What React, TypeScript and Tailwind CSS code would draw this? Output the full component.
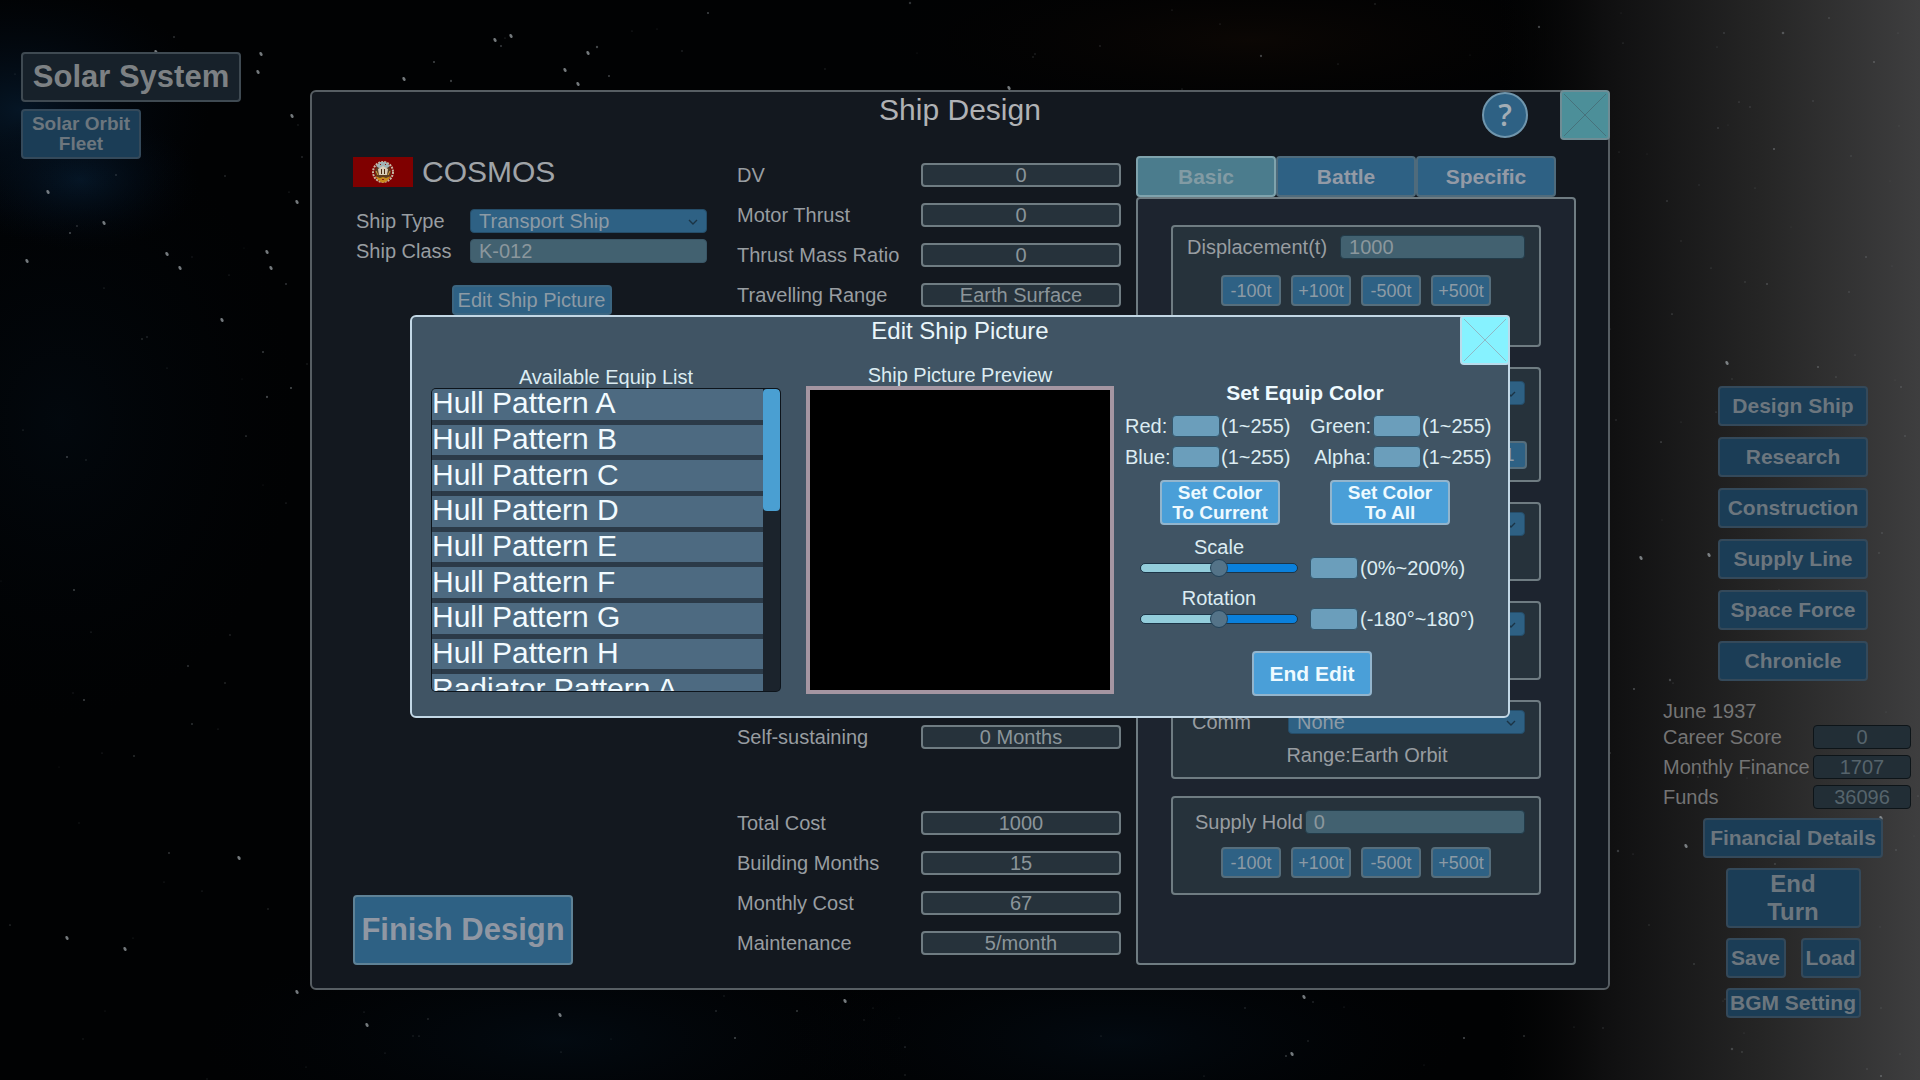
import { Fragment, useId, useState } from "react";
import type { ReactNode } from "react";

const menuItems = ["Design Ship", "Research", "Construction", "Supply Line", "Space Force", "Chronicle"];

const accounts = [
  { label: "Career Score", value: "0" },
  { label: "Monthly Finance", value: "1707" },
  { label: "Funds", value: "36096" },
];

const performance = [
  { label: "DV", value: "0" },
  { label: "Motor Thrust", value: "0" },
  { label: "Thrust Mass Ratio", value: "0" },
  { label: "Travelling Range", value: "Earth Surface" },
];

const costs = [
  { label: "Total Cost", value: "1000" },
  { label: "Building Months", value: "15" },
  { label: "Monthly Cost", value: "67" },
  { label: "Maintenance", value: "5/month" },
];

const equipList = [
  "Hull Pattern A",
  "Hull Pattern B",
  "Hull Pattern C",
  "Hull Pattern D",
  "Hull Pattern E",
  "Hull Pattern F",
  "Hull Pattern G",
  "Hull Pattern H",
  "Radiator Pattern A",
];

const channels = ["Red", "Green", "Blue", "Alpha"];
const steps = ["-100t", "+100t", "-500t", "+500t"];
const tabs = ["Basic", "Battle", "Specific"];

// small seeded generator, so the sky is the same on every render
function makeStars(count: number) {
  let seed = 20117;
  const next = () => {
    seed = (seed * 16807) % 2147483647;
    return seed / 2147483647;
  };
  return Array.from({ length: count }, () => ({
    x: Math.round(next() * 1920),
    y: Math.round(next() * 1080),
    r: 0.5 + next() * next() * 0.9,
    o: 0.15 + next() * 0.3,
  }));
}

const stars = makeStars(420);

const brightStars = [
  [156, 52], [167, 254], [267, 252], [271, 268], [180, 268], [297, 202], [292, 116], [261, 54], [258, 72],
  [404, 79], [511, 36], [495, 40], [578, 84], [222, 320], [48, 192], [27, 261], [104, 223], [565, 70],
  [588, 53], [367, 1025], [560, 1015], [845, 1001], [67, 938], [125, 949], [297, 992], [239, 858],
  [1304, 997], [1009, 88], [1292, 1054], [1727, 363], [1709, 555], [1641, 558], [1686, 846], [1881, 818],
];

function Sky() {
  return (
    <svg className="absolute inset-0 h-full w-full" viewBox="0 0 1920 1080" preserveAspectRatio="xMidYMid slice" aria-hidden="true">
      <defs>
        <radialGradient id="nebula">
          <stop offset="0" stopColor="#06192b" stopOpacity="0.85" />
          <stop offset="1" stopColor="#020812" stopOpacity="0" />
        </radialGradient>
        <radialGradient id="dust">
          <stop offset="0" stopColor="#120a05" stopOpacity="0.6" />
          <stop offset="1" stopColor="#000000" stopOpacity="0" />
        </radialGradient>
        <linearGradient id="glow" x1="0" x2="1" y1="0" y2="0">
          <stop offset="0" stopColor="#060606" stopOpacity="0" />
          <stop offset="0.25" stopColor="#0f0f10" />
          <stop offset="0.62" stopColor="#252525" />
          <stop offset="1" stopColor="#3e3e3f" />
        </linearGradient>
      </defs>
      <rect width="1920" height="1080" fill="#010203" />
      <ellipse cx="20" cy="110" rx="190" ry="130" fill="url(#nebula)" />
      <ellipse cx="80" cy="180" rx="120" ry="70" fill="url(#nebula)" />
      <ellipse cx="60" cy="420" rx="240" ry="300" fill="url(#nebula)" opacity="0.3" />
      <ellipse cx="560" cy="1040" rx="360" ry="110" fill="url(#nebula)" opacity="0.4" />
      <ellipse cx="1120" cy="1040" rx="340" ry="100" fill="url(#nebula)" opacity="0.4" />
      <ellipse cx="1250" cy="40" rx="420" ry="90" fill="url(#dust)" />
      <rect x="1500" width="420" height="1080" fill="url(#glow)" />
      {stars.map((s, i) => (
        <circle key={i} cx={s.x} cy={s.y} r={s.r} fill="#a9b0b5" opacity={s.o} />
      ))}
      {brightStars.map(([x, y]) => (
        <ellipse key={`${x}-${y}`} cx={x} cy={y} rx="1.4" ry="2.2" fill="#9aa0a4" opacity="0.75" transform={`rotate(-30 ${x} ${y})`} />
      ))}
    </svg>
  );
}

function Flag() {
  return (
    <svg className="h-[30px] w-[60px]" viewBox="0 0 60 30" role="img" aria-label="National flag">
      <rect width="60" height="30" fill="#7f0000" />
      <circle cx="30" cy="15" r="10" fill="none" stroke="#c9b9a4" strokeWidth="2" strokeDasharray="2 1" />
      <circle cx="30" cy="15" r="8" fill="#5d3d22" />
      <path d="M23 9l4-4h6l4 4-3 2h-8z" fill="#9fb3b5" />
      <path d="M25 12l5-3 5 3-1 6h-8z" fill="#d8cdb8" />
      <path d="M28 12h1v5h-1zM31 12h1v5h-1z" fill="#4a2a14" />
      <path d="M22 19l5 2 3-1 3 1 5-2-4 5-4 2-4-2z" fill="#c98a1c" />
      <path d="M23 14l2 4M37 14l-2 4" stroke="#d9a441" strokeWidth="1" />
      <path d="M27 7h1v1h-1zM32 7h1v1h-1zM29 22h2v1h-2z" fill="#8c1d12" />
    </svg>
  );
}

function CloseButton({ bright = false }: { bright?: boolean }) {
  return (
    <button
      type="button"
      aria-label="Close"
      className={
        bright
          ? "absolute -top-[2px] -right-[2px] size-[50px] rounded border-2 border-[#b9dcec] bg-[#86f2ff]"
          : "absolute -top-[2px] -right-[2px] size-[50px] rounded border-2 border-[#6f8d95] bg-[#4c8f99]"
      }
    >
      <svg viewBox="0 0 46 46" className="size-full" fill="none" stroke={bright ? "#8fb9c6" : "#47727c"} strokeWidth="1">
        <path d="M2 2L44 44M44 2L2 44" />
      </svg>
    </button>
  );
}

function MenuButton({ children, className = "" }: { children: ReactNode; className?: string }) {
  return (
    <button
      type="button"
      className={`rounded border-2 border-[#34495a] bg-[#1b3d56] text-[21px] leading-6 font-bold text-[#6c767e] ${className}`}
    >
      {children}
    </button>
  );
}

function ActionButton({ children, className = "" }: { children: ReactNode; className?: string }) {
  return (
    <button type="button" className={`rounded border-2 border-[#93b5cd] bg-[#4a9fd8] font-bold text-[#eefaff] ${className}`}>
      {children}
    </button>
  );
}

function ValueRow({ label, value }: { label: string; value: string }) {
  return (
    <div className="flex items-center justify-between">
      <dt className="leading-6">{label}</dt>
      <dd className="h-6 w-[200px] rounded border-2 border-[#6f7c82] bg-[#26323b] text-center leading-5 text-[#8b959a]">
        {value}
      </dd>
    </div>
  );
}

function Dropdown({ id, value, label }: { id?: string; value: string; label?: string }) {
  return (
    <div className="relative w-[237px]">
      <select
        id={id}
        aria-label={label}
        className="block h-6 w-full appearance-none rounded border border-[#254d69] bg-[#2e6184] pl-2 leading-5 text-[#8c9aa5]"
      >
        <option>{value}</option>
      </select>
      <svg viewBox="0 0 10 6" className="pointer-events-none absolute top-[10px] right-[9px] h-[6px] w-[10px]" fill="none" stroke="#1b3445" strokeWidth="1.4">
        <path d="M1 1l4 4 4-4" />
      </svg>
    </div>
  );
}

function Group({ children, className = "" }: { children?: ReactNode; className?: string }) {
  return <section className={`rounded border-2 border-[#6f7c82] bg-[#26323b] px-[14px] ${className}`}>{children}</section>;
}

function StepButtons() {
  return (
    <div className="flex justify-center gap-[10px]">
      {steps.map((step) => (
        <button
          key={step}
          type="button"
          className="h-[31px] w-[60px] rounded border-2 border-[#566e7c] bg-[#2e6184] text-[18px] leading-6 text-[#8c9aa5]"
        >
          {step}
        </button>
      ))}
    </div>
  );
}

function Tonnage({ label, value, className }: { label: string; value: string; className: string }) {
  const id = useId();
  return (
    <div className={`flex ${className}`}>
      <label htmlFor={id} className="leading-6">
        {label}
      </label>
      <input
        id={id}
        defaultValue={value}
        className="h-6 min-w-0 flex-1 rounded border border-[#223b49] bg-[#426170] px-2 text-[#8b979d]"
      />
    </div>
  );
}

function ShipDesign() {
  const [tab, setTab] = useState("Basic");

  return (
    <div role="dialog" aria-label="Ship Design" className="relative w-full max-w-[1300px] rounded-md border-2 border-[#575e63] bg-[#13181f] text-[20px] text-[#989da1]">
      <header className="relative h-16">
        <h1 className="text-center text-[30px] leading-9 text-[#b0b2b5]">Ship Design</h1>
        <button
          type="button"
          aria-label="Help"
          className="absolute top-0 right-20 size-[46px] rounded-full border-2 border-[#7096ad] bg-[#2e6184] font-['Open_Sans',sans-serif] text-[30px] leading-10 font-semibold text-[#a3adb5]"
        >
          ?
        </button>
        <CloseButton />
      </header>

      <div className="flex pr-8 pb-[23px] pl-[41px]">
        <div className="flex flex-1 flex-col">
          <div className="flex items-center gap-[9px]">
            <Flag />
            <h2 className="text-[30px] leading-8 text-[#a0a4a8]">COSMOS</h2>
          </div>
          <div className="mt-[21px] grid w-[355px] grid-cols-[114px_237px] gap-y-[6px] pl-[3px]">
            <label htmlFor="ship-type" className="leading-6">
              Ship Type
            </label>
            <Dropdown id="ship-type" value="Transport Ship" />
            <label htmlFor="ship-class" className="leading-6">
              Ship Class
            </label>
            <input
              id="ship-class"
              defaultValue="K-012"
              className="h-6 rounded border border-[#3a5666] bg-[#426170] px-2 text-[#8b979d]"
            />
            <div className="col-span-2 mt-4 flex justify-center">
              <button type="button" className="h-[30px] w-[160px] rounded border-2 border-[#3b6580] bg-[#2e6184] leading-6 text-[#8c9aa5]">
                Edit Ship Picture
              </button>
            </div>
          </div>
          <button
            type="button"
            className="mt-auto h-[70px] w-[220px] rounded border-2 border-[#5f8296] bg-[#2e6184] text-[31px] font-bold text-[#9097a3]"
          >
            Finish Design
          </button>
        </div>

        <div className="flex w-[384px] flex-col pt-[7px] pb-[10px]">
          <dl className="flex flex-col gap-4">
            {performance.map((row) => (
              <ValueRow key={row.label} {...row} />
            ))}
          </dl>
          <dl className="mt-auto">
            <ValueRow label="Self-sustaining" value="0 Months" />
          </dl>
          <dl className="mt-[62px] flex flex-col gap-4">
            {costs.map((row) => (
              <ValueRow key={row.label} {...row} />
            ))}
          </dl>
        </div>

        <div className="ml-[15px] w-[440px]">
          <div role="tablist" className="flex">
            {tabs.map((name) => (
              <button
                key={name}
                type="button"
                role="tab"
                aria-selected={tab === name}
                onClick={() => setTab(name)}
                className={
                  tab === name
                    ? "h-[41px] w-[140px] rounded border-2 border-[#7fa3ad] bg-[#4b7c8d] text-[21px] font-bold text-[#829ba4]"
                    : "h-[41px] w-[140px] rounded border-2 border-[#4f6b7c] bg-[#2e6184] text-[21px] font-bold text-[#939aa6]"
                }
              >
                {name}
              </button>
            ))}
          </div>
          <div role="tabpanel" className="flex flex-col gap-5 rounded border-2 border-[#6f7c82] bg-[#1d242f] px-[33px] pt-[26px] pb-[68px]">
            <Group className="pt-2 pb-[39px]">
              <Tonnage label="Displacement(t)" value="1000" className="mb-4 gap-[13px]" />
              <StepButtons />
            </Group>
            <Group className="flex h-[115px] flex-col items-end pt-3">
              <Dropdown label="Motor" value="" />
              <button type="button" className="mt-9 -mr-[2px] h-7 w-[35px] rounded border-2 border-[#566e7c] bg-[#2e6184] text-[18px] leading-6 text-[#8c9aa5]">
                1
              </button>
            </Group>
            <Group className="flex h-[79px] flex-col items-end pt-2">
              <Dropdown label="Tank" value="" />
            </Group>
            <Group className="flex h-[79px] flex-col items-end pt-[9px]">
              <Dropdown label="Power" value="" />
            </Group>
            <div className="flex flex-col gap-[17px]">
              <Group className="h-[79px] pt-2">
                <div className="flex justify-between pl-[5px]">
                  <label htmlFor="comm" className="leading-6">
                    Comm
                  </label>
                  <Dropdown id="comm" value="None" />
                </div>
                <p className="mt-[9px] pl-[22px] text-center leading-6">Range:Earth Orbit</p>
              </Group>
              <Group className="pt-3 pb-[15px]">
                <Tonnage label="Supply Hold" value="0" className="mb-[13px] gap-[2px] pl-2" />
                <StepButtons />
              </Group>
            </div>
          </div>
        </div>
      </div>
    </div>
  );
}

function SmallInput({ id, label }: { id?: string; label?: string }) {
  return (
    <input
      id={id}
      aria-label={label}
      className="h-[22px] w-12 rounded border border-[#33566c] bg-[#6b9ebb] px-1 text-[18px] text-[#eefaff]"
    />
  );
}

function SliderRow({ label, hint, min, max }: { label: string; hint: string; min: number; max: number }) {
  const id = useId();
  return (
    <div className="grid grid-cols-[158px_60px_auto] items-center">
      <label htmlFor={id} className="text-center leading-5">
        {label}
      </label>
      <input
        id={id}
        type="range"
        min={min}
        max={max}
        className="col-start-1 h-[10px] w-full appearance-none rounded-full border border-[#1c3548] bg-linear-to-r from-[#93cddb] from-50% to-[#0a80dc] to-50% [&::-webkit-slider-thumb]:size-[18px] [&::-webkit-slider-thumb]:appearance-none [&::-webkit-slider-thumb]:rounded-full [&::-webkit-slider-thumb]:border [&::-webkit-slider-thumb]:border-[#24445a] [&::-webkit-slider-thumb]:bg-[#547388]"
      />
      <div className="flex justify-end">
        <SmallInput label={`${label} value`} />
      </div>
      <span className="pl-[2px] leading-[22px]">{hint}</span>
    </div>
  );
}

function EditShipPicture() {
  return (
    <div role="dialog" aria-label="Edit Ship Picture" className="relative w-full max-w-[1100px] rounded-md border-2 border-[#c3d8e6] bg-[#405464] text-[20px] text-[#dcecf2]">
      <header className="h-12">
        <h2 className="text-center text-[24px] leading-7 text-[#eaf6fb]">Edit Ship Picture</h2>
        <CloseButton bright />
      </header>

      <div className="flex pr-[17px] pb-5 pl-5">
        <div className="flex-1">
          <h3 className="text-center leading-6">Available Equip List</h3>
          <div className="flex h-[302px] overflow-hidden rounded-sm bg-[#1b232c] ring-1 ring-[#0d141b]">
            <ul className="grid h-[316px] flex-1 grid-rows-9 gap-[5px] bg-[#2b3a48]">
              {equipList.map((name) => (
                <li key={name} className="min-h-0">
                  <button type="button" className="flex h-full w-full items-center bg-[#4d6a81] pb-[2px] text-[30px] leading-[30px] text-[#f2fbff]">
                    {name}
                  </button>
                </li>
              ))}
            </ul>
            <div className="w-[17px]">
              <div className="h-[122px] rounded bg-[#4a9fd2]" />
            </div>
          </div>
        </div>

        <div className="ml-[26px]">
          <h3 className="text-center leading-[21px]">Ship Picture Preview</h3>
          <div className="size-[308px] border-4 border-[#a596a2] bg-black" />
        </div>

        <form className="ml-[11px] flex w-[366px] flex-col pt-4">
          <h3 className="pr-[6px] text-center text-[21px] leading-6 font-bold text-[#eefaff]">Set Equip Color</h3>
          <div className="mt-[10px] grid grid-cols-[47px_48px_90px_63px_48px_70px] gap-y-[9px] leading-[22px]">
            {channels.map((name, i) => (
              <Fragment key={name}>
                <label htmlFor={name} className={i % 2 ? "pr-[2px] text-right" : ""}>
                  {name}:
                </label>
                <SmallInput id={name} />
                <span className="pl-px">(1~255)</span>
              </Fragment>
            ))}
          </div>
          <div className="mt-3 flex justify-center gap-[50px] pr-[6px] text-[19px] leading-5">
            <ActionButton className="h-[45px] w-[120px]">
              Set Color
              <br />
              To Current
            </ActionButton>
            <ActionButton className="h-[45px] w-[120px]">
              Set Color
              <br />
              To All
            </ActionButton>
          </div>
          <div className="mt-3 flex flex-col gap-[9px] pl-[15px]">
            <SliderRow label="Scale" hint="(0%~200%)" min={0} max={200} />
            <SliderRow label="Rotation" hint="(-180°~180°)" min={-180} max={180} />
          </div>
          <div className="mt-[21px] flex justify-center pl-2">
            <ActionButton className="h-[45px] w-[120px] text-[21px]">End Edit</ActionButton>
          </div>
        </form>
      </div>
    </div>
  );
}

export default function App() {
  return (
    <main className="relative flex min-h-screen justify-between overflow-hidden bg-black font-['Liberation_Sans',Arial,sans-serif]">
      <Sky />

      {/* Location */}
      <div className="relative flex flex-col items-start gap-[7px] pt-[52px] pl-[21px]">
        <button type="button" className="h-[50px] w-[220px] rounded border-2 border-[#3f4a52] bg-[#17212a] text-[31px] leading-10 font-bold text-[#7d8184]">
          Solar System
        </button>
        <MenuButton className="h-[50px] w-[120px]">
          <span className="block text-[19px] leading-5">
            Solar Orbit
            <br />
            Fleet
          </span>
        </MenuButton>
      </div>

      {/* Command menu */}
      <aside className="relative flex w-[257px] flex-col justify-end pr-[9px] pb-[62px] text-[20px] text-[#747474]">
        <nav className="flex flex-col items-center gap-[11px] pl-3">
          {menuItems.map((item) => (
            <MenuButton key={item} className="h-10 w-[150px]">
              {item}
            </MenuButton>
          ))}
        </nav>
        <p className="mt-[18px] leading-6">June 1937</p>
        <dl className="mt-[2px] flex flex-col gap-[6px]">
          {accounts.map((row) => (
            <div key={row.label} className="flex justify-between leading-6">
              <dt>{row.label}</dt>
              <dd className="h-6 w-[98px] rounded border border-[#0d1418] bg-[#222e36] text-center leading-[22px] text-[#56646c]">{row.value}</dd>
            </div>
          ))}
        </dl>
        <div className="mt-[9px] flex flex-col items-center gap-[10px] pl-3">
          <MenuButton className="h-10 w-[180px]">Financial Details</MenuButton>
          <MenuButton className="h-[60px] w-[135px]">
            <span className="block text-[24px] leading-7">
              End
              <br />
              Turn
            </span>
          </MenuButton>
          <div className="flex gap-[15px]">
            <MenuButton className="h-10 w-[60px]">Save</MenuButton>
            <MenuButton className="h-10 w-[60px]">Load</MenuButton>
          </div>
          <MenuButton className="h-[30px] w-[135px] whitespace-nowrap">BGM Setting</MenuButton>
        </div>
      </aside>

      {/* Stacked dialogs */}
      <div className="absolute inset-0 flex items-center justify-center">
        <ShipDesign />
      </div>
      <div className="absolute inset-0 flex items-center justify-center pb-[47px]">
        <EditShipPicture />
      </div>
    </main>
  );
}
